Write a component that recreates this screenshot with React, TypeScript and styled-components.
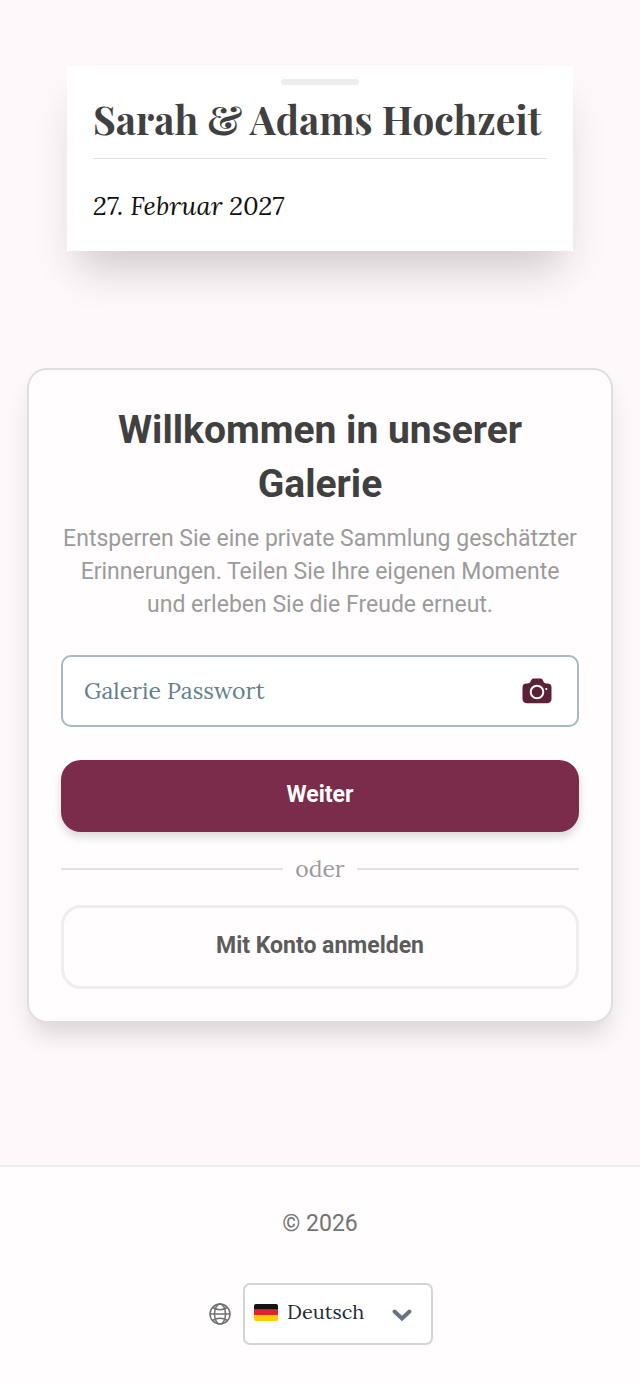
import React from "react";
import styled, { createGlobalStyle } from "styled-components";

const sans = `Roboto, "Liberation Sans", sans-serif`;
const serif = `Lora, "Liberation Serif", serif`;
const display = `"Playfair Display", "Liberation Serif", serif`;

const GlobalStyle = createGlobalStyle`
  *, *::before, *::after { box-sizing: border-box; }
  body { margin: 0; background: #fef8fa; font-family: ${sans}; }
  h1, h2, p { margin: 0; }
`;

const Page = styled.div`
  display: flex;
  flex-direction: column;
  min-height: 100vh;
`;

const Main = styled.main`
  flex: 1;
  display: flex;
  flex-direction: column;
  align-items: center;
  gap: 117px;
  padding: 66px 27px 142px;
`;

const EventCard = styled.header`
  display: flex;
  flex-direction: column;
  width: calc(100% - 80px);
  max-width: 560px;
  padding: 13px 26px 25px;
  background: #fff;
  box-shadow: 0 28px 40px -12px rgba(40, 28, 33, 0.22);
`;

const Handle = styled.div`
  align-self: center;
  width: 78px;
  height: 6px;
  border-radius: 3px;
  background: #ededed;
`;

const EventTitle = styled.h1`
  padding-bottom: 5px;
  border-bottom: 1px solid #e4e4e4;
  color: #404040;
  font: 700 39px/68px ${display};
`;

const EventDate = styled.p`
  margin-top: 26px;
  color: #111;
  font: italic 400 26px/41px ${serif};
`;

const LoginCard = styled.section`
  width: 100%;
  max-width: 640px;
  padding: 33px 32px 32px;
  border: 2px solid #e0dee0;
  border-radius: 20px;
  background: #fffdfe;
  box-shadow: 0 16px 25px -6px rgba(40, 28, 33, 0.17);
`;

const Heading = styled.h2`
  color: #404040;
  font: 700 39px/54px ${sans};
  text-align: center;
`;

const Intro = styled.p`
  margin-top: 11px;
  color: #9b9b9b;
  font: 400 23px/33px ${sans};
  text-align: center;
`;

const Form = styled.form`
  display: flex;
  flex-direction: column;
  margin-top: 34px;
`;

const Field = styled.label`
  display: flex;
  align-items: center;
  height: 72px;
  padding: 0 25px 0 21px;
  border: 2px solid #a6b8c1;
  border-radius: 10px;
  background: #fff;
`;

const PasswordInput = styled.input`
  flex: 1;
  min-width: 0;
  padding: 0;
  border: 0;
  outline: 0;
  background: transparent;
  color: #334b57;
  font: 400 23px/36px ${serif};
  &::placeholder { color: #64808d; opacity: 1; }
`;

const Button = styled.button<{ $outline?: boolean }>`
  height: ${(p) => (p.$outline ? 84 : 72)}px;
  padding: 0 20px 2px;
  border: ${(p) => (p.$outline ? "3px solid #eeeeee" : "0")};
  border-radius: 20px;
  background: ${(p) => (p.$outline ? "transparent" : "#7a2c4a")};
  box-shadow: ${(p) => (p.$outline ? "none" : "0 5px 9px rgba(40, 20, 30, 0.16)")};
  color: ${(p) => (p.$outline ? "#5c5c5c" : "#fff")};
  font: 700 23px/32px ${sans};
  cursor: pointer;
`;

const SubmitButton = styled(Button)`
  margin-top: 33px;
`;

const Divider = styled.div`
  display: flex;
  align-items: center;
  gap: 12px;
  height: 73px;
  color: #9b9b9b;
  font: 400 23px/36px ${serif};
  &::before, &::after {
    content: "";
    flex: 1;
    height: 2px;
    background: #e2e2e2;
  }
`;

const Footer = styled.footer`
  display: flex;
  flex-direction: column;
  align-items: center;
  gap: 43px;
  padding: 41px 26px 40px;
  border-top: 2px solid #efeef0;
  background: #fffdfe;
`;

const Copyright = styled.p`
  color: #737373;
  font: 400 23px/32px ${sans};
`;

const LanguageRow = styled.div`
  display: flex;
  align-items: center;
  gap: 12px;
  padding-left: 2px;
`;

const SelectBox = styled.div`
  position: relative;
`;

const LanguageSelect = styled.select`
  appearance: none;
  display: block;
  width: 190px;
  height: 62px;
  padding: 0 60px 4px 42px;
  border: 2px solid #d1d5db;
  border-radius: 7px;
  background: #fff;
  color: #1f2937;
  font: 400 20px/32px ${serif};
`;

const Flag = styled.svg`
  position: absolute;
  left: 11px;
  top: 21px;
  pointer-events: none;
`;

const Chevron = styled.svg`
  position: absolute;
  right: 20px;
  top: 24px;
  pointer-events: none;
`;

const CameraIcon = () => (
  <svg width="30" height="26" viewBox="0 0 30 26" aria-hidden="true">
    <path
      d="M4.5 5.500H6C8.200 5.500 8.400 3.400 9.400 1.800C10 .8 10.800.4 12 .4h6c1.200 0 2 .4 2.600 1.400C21.600 3.400 21.800 5.500 24 5.500h1.500a4 4 0 0 1 4 4V21a4.300 4.300 0 0 1-4.300 4.300H4.800A4.300 4.300 0 0 1 .5 21V9.500a4 4 0 0 1 4-4Z"
      fill="#5c2038"
    />
    <circle cx="15" cy="14" r="6.300" fill="none" stroke="#fff" strokeWidth="2" />
    <circle cx="24.300" cy="11" r="1.100" fill="#fff" />
  </svg>
);

const GlobeIcon = () => (
  <svg width="22" height="22" viewBox="0 0 22 22" fill="none" stroke="#707070" strokeWidth="1.500" aria-hidden="true">
    <circle cx="11" cy="11" r="10" />
    <ellipse cx="11" cy="11" rx="5.500" ry="10" />
    <path d="M1 11h20M3.500 4.500q7.500 4.400 15 0M3.500 17.500q7.500-4.400 15 0" />
  </svg>
);

export default function App() {
  return (
    <Page>
      <GlobalStyle />
      <Main>
        <EventCard>
          <Handle />
          <EventTitle>Sarah &amp; Adams Hochzeit</EventTitle>
          <EventDate>27. Februar 2027</EventDate>
        </EventCard>
        <LoginCard>
          <Heading>Willkommen in unserer Galerie</Heading>
          <Intro>
            Entsperren Sie eine private Sammlung geschätzter Erinnerungen. Teilen Sie Ihre eigenen
            Momente und erleben Sie die Freude erneut.
          </Intro>
          <Form onSubmit={(e) => e.preventDefault()}>
            <Field>
              <PasswordInput type="password" placeholder="Galerie Passwort" aria-label="Galerie Passwort" />
              <CameraIcon />
            </Field>
            <SubmitButton type="submit">Weiter</SubmitButton>
            <Divider>oder</Divider>
            <Button type="button" $outline>
              Mit Konto anmelden
            </Button>
          </Form>
        </LoginCard>
      </Main>
      <Footer>
        <Copyright>© 2026</Copyright>
        <LanguageRow>
          <GlobeIcon />
          <SelectBox>
            <LanguageSelect aria-label="Sprache" defaultValue="de">
              <option value="de">Deutsch</option>
            </LanguageSelect>
            <Flag width="24" height="17" viewBox="0 0 24 18" preserveAspectRatio="none" aria-hidden="true">
              <clipPath id="flag-shape">
                <rect width="24" height="18" rx="2" />
              </clipPath>
              <g clipPath="url(#flag-shape)">
                <path d="M0 0h24v6H0z" fill="#141414" />
                <path d="M0 6h24v6H0z" fill="#e8202a" />
                <path d="M0 12h24v6H0z" fill="#fc0" />
              </g>
            </Flag>
            <Chevron width="22" height="16" viewBox="0 0 22 16" aria-hidden="true">
              <path d="M3.500 4.500 11 11.500l7.500-7" fill="none" stroke="#6b7280" strokeWidth="4" strokeLinecap="round" />
            </Chevron>
          </SelectBox>
        </LanguageRow>
      </Footer>
    </Page>
  );
}
